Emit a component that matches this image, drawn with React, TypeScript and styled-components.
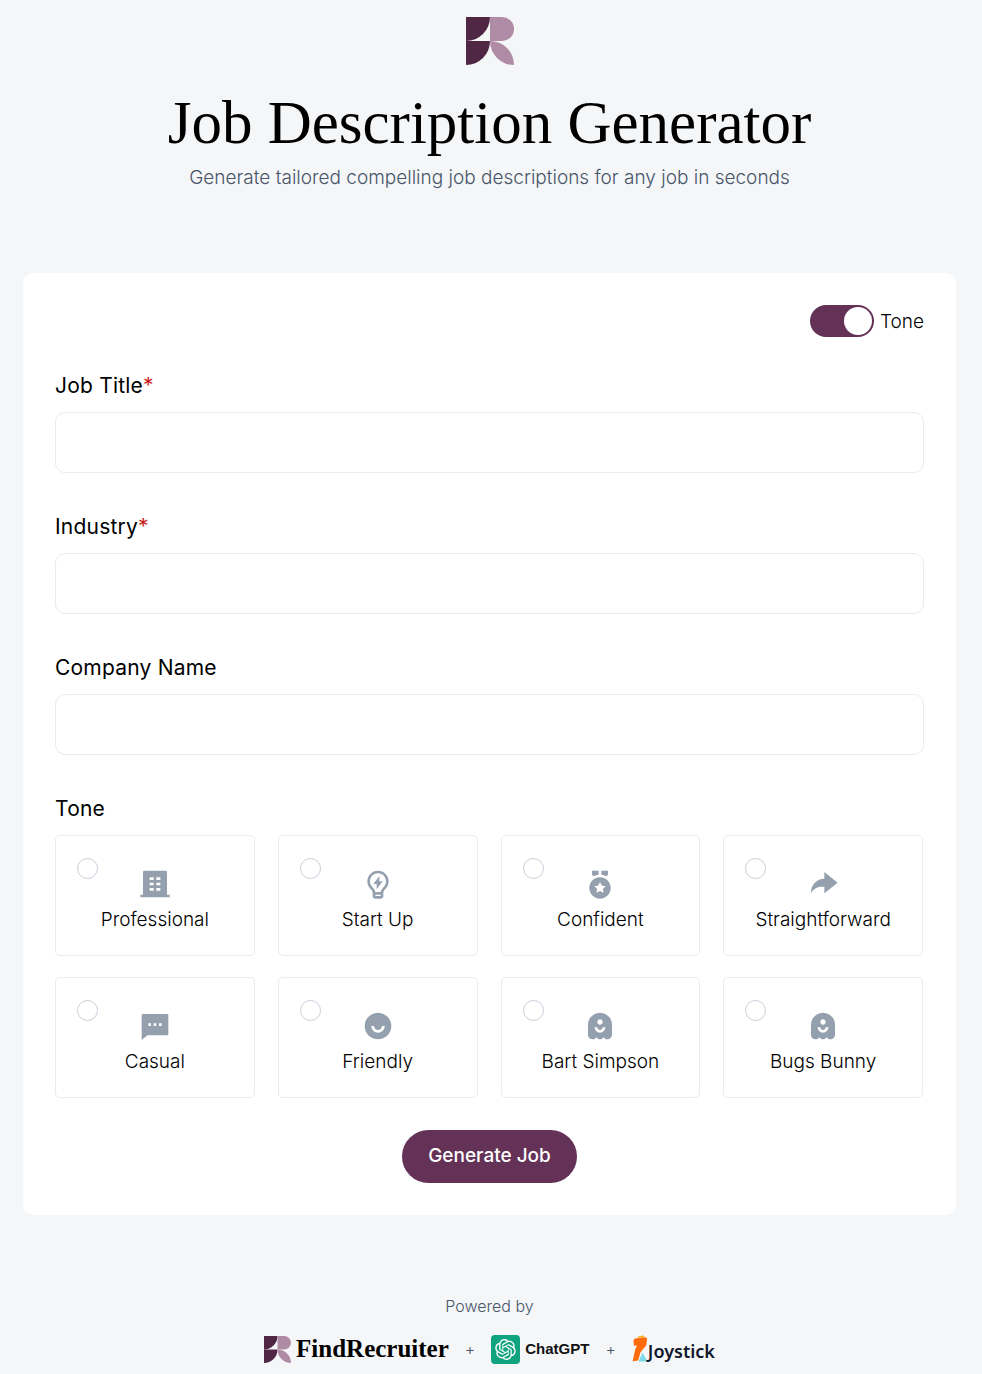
import React, { useState } from "react";
import styled, { createGlobalStyle } from "styled-components";
import type { IconType } from "react-icons";
import {
  RiBuilding4Fill,
  RiLightbulbFlashLine,
  RiMedalFill,
  RiShareForwardFill,
  RiMessage2Fill,
  RiUserSmileFill,
  RiGhostSmileFill,
  RiOpenaiFill,
} from "react-icons/ri";

const plum = "#643157";

const GlobalStyle = createGlobalStyle`
  *, *::before, *::after { box-sizing: border-box; }
  body {
    margin: 0;
    background: #f5f6f8;
    color: #000;
    font-family: Inter, "Liberation Sans", sans-serif;
  }
`;

const Page = styled.div`
  display: flex;
  flex-direction: column;
  padding: 17px 26px 8px 23px;
`;

const Header = styled.header`
  display: flex;
  flex-direction: column;
  align-items: center;
  text-align: center;
`;

const Title = styled.h1`
  margin: 22px 0 0;
  font-family: "Liberation Serif", serif;
  font-size: 61px;
  font-weight: 400;
  line-height: 72px;
`;

const Subtitle = styled.p`
  margin: 4px 0 0;
  font-size: 19px;
  font-weight: 300;
  line-height: 29px;
  color: #475569;
`;

const Card = styled.form`
  display: flex;
  flex-direction: column;
  margin-top: 81px;
  padding: 32px;
  border-radius: 10px;
  background: #fff;
`;

const ToggleRow = styled.label`
  display: flex;
  align-items: center;
  align-self: flex-end;
  gap: 6px;
  font-size: 19px;
  font-weight: 300;
  line-height: 29px;
`;

const Switch = styled.input`
  appearance: none;
  width: 64px;
  height: 32px;
  margin: 0;
  padding: 2px;
  border-radius: 16px;
  background: ${plum};
  cursor: pointer;

  &::before {
    content: "";
    display: block;
    width: 28px;
    height: 28px;
    border-radius: 50%;
    background: #fff;
  }
  &:checked::before { margin-left: 32px; }
  &:not(:checked) { background: #94a3b8; }
`;

const Fields = styled.div`
  display: flex;
  flex-direction: column;
  gap: 39px;
  margin-top: 34px;
`;

const Field = styled.div`
  display: flex;
  flex-direction: column;
  gap: 11px;
`;

const Label = styled.label`
  font-size: 21px;
  font-weight: 400;
  line-height: 30px;
  letter-spacing: 0.01em;
`;

const Required = styled.span`
  color: #c81e1e;
`;

const TextInput = styled.input`
  width: 100%;
  height: 61px;
  padding: 0 20px;
  border: 1px solid #e9ebf0;
  border-radius: 10px;
  background: #fff;
  font: 300 19px Inter, sans-serif;
`;

const ToneGroup = styled.fieldset`
  min-width: 0;
  margin: 0;
  padding: 0;
  border: 0;
`;

const ToneLegend = styled(Label).attrs({ as: "legend" })`
  padding: 0;
  margin-bottom: 11px;
`;

const ToneGrid = styled.div`
  display: grid;
  grid-template-columns: repeat(4, 1fr);
  gap: 21px 23px;
  padding-right: 1px;
`;

const ToneCard = styled.label`
  position: relative;
  display: flex;
  flex-direction: column;
  align-items: center;
  height: 121px;
  padding-top: 32px;
  border: 1px solid #e9ebf0;
  border-radius: 5px;
  font-size: 19px;
  font-weight: 300;
  line-height: 29px;
  cursor: pointer;

  svg { color: #94a0ae; }
`;

const ToneName = styled.span`
  margin-top: 5px;
`;

const Radio = styled.input`
  appearance: none;
  position: absolute;
  top: 22px;
  left: 21px;
  width: 21px;
  height: 21px;
  margin: 0;
  border: 1px solid #c5ced8;
  border-radius: 50%;
  background: #fff;

  &:checked { border: 6px solid ${plum}; }
`;

const SubmitButton = styled.button`
  align-self: center;
  height: 53px;
  margin-top: 32px;
  padding: 0 26px 2px;
  border: 0;
  border-radius: 27px;
  background: ${plum};
  color: #fff;
  font: 500 19px Inter, sans-serif;
  cursor: pointer;
`;

const Footer = styled.footer`
  display: flex;
  flex-direction: column;
  align-items: center;
  gap: 16px;
  margin-top: 79px;
  color: #475569;
  font-size: 16px;
  font-weight: 300;
  line-height: 24px;
`;

const Partners = styled.div`
  display: flex;
  align-items: center;
  gap: 16px;
`;

const Partner = styled.a`
  display: flex;
  align-items: center;
  gap: 5px;
  height: 30px;
  text-decoration: none;
`;

const RecruiterName = styled.span`
  font: 700 25px/28px "Liberation Serif", serif;
  color: #000;
`;

const ChatName = styled.span`
  font: 700 15px/28px "Liberation Sans", sans-serif;
  color: #111;
`;

const JoystickName = styled.span`
  padding-top: 3px;
  font: 600 18px/28px "Noto Sans", sans-serif;
  color: #10182c;
`;

const JoystickPartner = styled(Partner)`
  gap: 0;
`;

const ChatBadge = styled.span`
  display: grid;
  place-items: center;
  width: 29px;
  height: 29px;
  border-radius: 4px;
  background: #10a37f;
  color: #fff;
`;

function Mark({ size }: { size: number }) {
  return (
    <svg width={size} height={size} viewBox="0 0 48 48" aria-hidden="true">
      <path d="M0 0h24A24 24 0 0 1 0 24z" fill="#4f2745" />
      <path d="M0 24h24A24 24 0 0 1 0 48z" fill="#4f2745" />
      <path d="M24 0h12a12 12 0 0 1 0 24H24z" fill="#b08ba6" />
      <path d="M24 24a24 24 0 0 1 24 24a24 24 0 0 1-24-24z" fill="#b08ba6" />
    </svg>
  );
}

function JoystickMark() {
  return (
    <svg width="16" height="28" viewBox="0 0 16 28" aria-hidden="true">
      <path d="M10.500 17.500L15.500 26.500H6.500z" fill="#7fdbe8" />
      <path d="M1.500 5.500Q1.500 4 3.200 3.600L13 2.200Q15.500 2.400 15 5L14.300 9.500Q13.900 11.500 12 13L8.500 17.200L6.200 25.500L.6 26.300L3.200 14.500L5 10.500L2 10.800z" fill="#ff6b0a" />
      <path d="M5.300 2.700L6 1.500L11.200.400Q12.400.500 12.100 2.100z" fill="#ffa400" />
    </svg>
  );
}

const tones: { name: string; Icon: IconType }[] = [
  { name: "Professional", Icon: RiBuilding4Fill },
  { name: "Start Up", Icon: RiLightbulbFlashLine },
  { name: "Confident", Icon: RiMedalFill },
  { name: "Straightforward", Icon: RiShareForwardFill },
  { name: "Casual", Icon: RiMessage2Fill },
  { name: "Friendly", Icon: RiUserSmileFill },
  { name: "Bart Simpson", Icon: RiGhostSmileFill },
  { name: "Bugs Bunny", Icon: RiGhostSmileFill },
];

const fields = [
  { id: "job-title", label: "Job Title", required: true },
  { id: "industry", label: "Industry", required: true },
  { id: "company", label: "Company Name", required: false },
];

export default function App() {
  const [showTone, setShowTone] = useState(true);

  return (
    <>
      <GlobalStyle />
      <Page>
        <Header>
          <Mark size={48} />
          <Title>Job Description Generator</Title>
          <Subtitle>Generate tailored compelling job descriptions for any job in seconds</Subtitle>
        </Header>

        <Card onSubmit={(e: React.FormEvent) => e.preventDefault()}>
          <ToggleRow>
            <Switch
              type="checkbox"
              role="switch"
              checked={showTone}
              onChange={() => setShowTone(!showTone)}
            />
            Tone
          </ToggleRow>

          <Fields>
            {fields.map((f) => (
              <Field key={f.id}>
                <Label htmlFor={f.id}>
                  {f.label}
                  {f.required && <Required>*</Required>}
                </Label>
                <TextInput id={f.id} type="text" required={f.required} />
              </Field>
            ))}
            {showTone && (
              <ToneGroup>
                <ToneLegend>Tone</ToneLegend>
                <ToneGrid>
                  {tones.map(({ name, Icon }) => (
                    <ToneCard key={name}>
                      <Radio type="radio" name="tone" value={name} />
                      <Icon size={32} aria-hidden="true" />
                      <ToneName>{name}</ToneName>
                    </ToneCard>
                  ))}
                </ToneGrid>
              </ToneGroup>
            )}
          </Fields>

          <SubmitButton type="submit">Generate Job</SubmitButton>
        </Card>

        <Footer>
          <span>Powered by</span>
          <Partners>
            <Partner href="#findrecruiter">
              <Mark size={27} />
              <RecruiterName>FindRecruiter</RecruiterName>
            </Partner>
            <span>+</span>
            <Partner href="#chatgpt">
              <ChatBadge>
                <RiOpenaiFill size={25} aria-hidden="true" />
              </ChatBadge>
              <ChatName>ChatGPT</ChatName>
            </Partner>
            <span>+</span>
            <JoystickPartner href="#joystick">
              <JoystickMark />
              <JoystickName>Joystick</JoystickName>
            </JoystickPartner>
          </Partners>
        </Footer>
      </Page>
    </>
  );
}
